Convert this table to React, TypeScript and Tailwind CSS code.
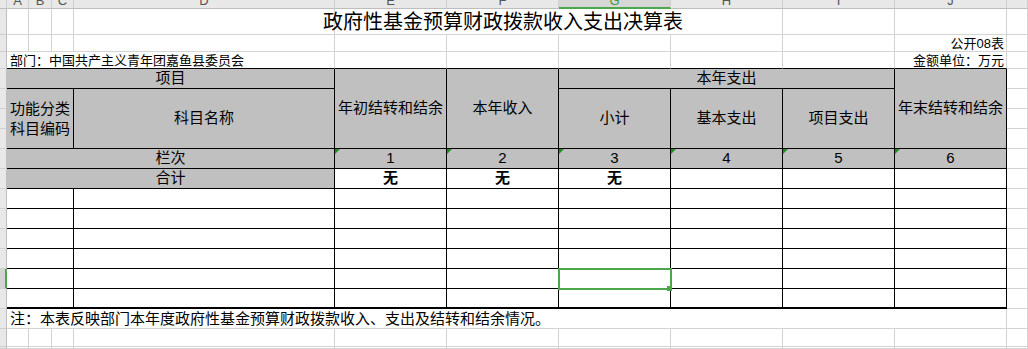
import type { ReactNode } from "react";

const COL: Record<number, string> = {
  1: "col-start-1",
  2: "col-start-2",
  3: "col-start-3",
  4: "col-start-4",
  5: "col-start-5",
  6: "col-start-6",
  7: "col-start-7",
  8: "col-start-8",
  9: "col-start-9",
  10: "col-start-10",
  11: "col-start-11",
  12: "col-start-12",
};

const ROW: Record<number, string> = {
  1: "row-start-1",
  2: "row-start-2",
  3: "row-start-3",
  4: "row-start-4",
  5: "row-start-5",
  6: "row-start-6",
  7: "row-start-7",
  8: "row-start-8",
  9: "row-start-9",
  10: "row-start-10",
  11: "row-start-11",
  12: "row-start-12",
  13: "row-start-13",
  14: "row-start-14",
  15: "row-start-15",
  16: "row-start-16",
  17: "row-start-17",
  18: "row-start-18",
  19: "row-start-19",
};

const CSPAN: Record<number, string> = { 1: "col-span-1", 3: "col-span-3", 4: "col-span-4", 10: "col-span-10" };
const RSPAN: Record<number, string> = { 1: "row-span-1", 3: "row-span-3", 4: "row-span-4" };

const GRID = "border-r border-b border-[#d4d4d4]";
const BLACK = "border-r border-b border-black";
const GRAY = "bg-[#c0c0c0]";
const TOPROW = "border-r border-b border-r-[#d4d4d4] border-b-black";

const letters = ["", "A", "B", "C", "D", "E", "F", "G", "H", "I", "J", ""];
const dataRows = [11, 12, 13, 14, 15, 16];

function Cell({
  c,
  r,
  cs = 1,
  rs = 1,
  className = "",
  children,
}: {
  c: number;
  r: number;
  cs?: number;
  rs?: number;
  className?: string;
  children?: ReactNode;
}) {
  return (
    <div className={`${COL[c]} ${ROW[r]} ${CSPAN[cs]} ${RSPAN[rs]} flex min-h-0 min-w-0 items-center ${className}`}>
      {children}
    </div>
  );
}

// green "number stored as text" marker
function Marker() {
  return (
    <svg className="absolute left-0 top-0" width="5" height="5" viewBox="0 0 5 5">
      <polygon points="0,0 5,0 0,5" fill="#1f8f1f" />
    </svg>
  );
}

export default function App() {
  return (
    <div className="h-[349px] w-full overflow-hidden bg-white font-['Liberation_Sans','Noto_Sans_CJK_SC',sans-serif] text-black">
      <div className="grid h-full grid-cols-[7px_22px_23px_22px_261px_repeat(6,112px)_1fr] grid-rows-[9px_26px_17px_17px_repeat(13,20px)_18px_1fr]">
        {/* ── column headers ── */}
        {letters.map((l, i) => (
          <Cell
            key={"h" + i}
            c={i + 1}
            r={1}
            className={
              i === 7
                ? "items-start justify-center overflow-hidden border-r border-b-2 border-r-[#cfcfcf] border-b-[#4ca64c] bg-[#d6d6d6] text-[#3f9a3f]"
                : "items-start justify-center overflow-hidden border-r border-b border-r-[#cfcfcf] border-b-[#bdbdbd] bg-[#e8e8e8] text-[#555]"
            }
          >
            <span className="-mt-[6px] text-[13px] leading-none">{l}</span>
          </Cell>
        ))}

        {/* ── row headers ── */}
        {Array.from({ length: 18 }, (_, k) => k + 2).map((r) => (
          <Cell
            key={"r" + r}
            c={1}
            r={r}
            className={
              r === 15
                ? "border-r-2 border-b border-r-[#4ca64c] border-b-[#cfcfcf] bg-[#d4d4d4]"
                : "border-r border-b border-r-[#bdbdbd] border-b-[#cfcfcf] bg-[#e8e8e8]"
            }
          />
        ))}

        {/* ── row 1: title ── */}
        {[2, 3, 4, 5].map((c) => (
          <Cell key={"t" + c} c={c} r={2} className={GRID} />
        ))}
        <Cell c={6} cs={4} r={2} className={GRID}>
          <span className="-ml-[12px] whitespace-nowrap text-[20px] leading-none">政府性基金预算财政拨款收入支出决算表</span>
        </Cell>
        {[10, 11, 12].map((c) => (
          <Cell key={"t" + c} c={c} r={2} className={GRID} />
        ))}

        {/* ── row 2 ── */}
        {[2, 3, 4, 5, 6, 7, 8, 9, 10].map((c) => (
          <Cell key={"a" + c} c={c} r={3} className={GRID} />
        ))}
        <Cell c={11} r={3} className={`${GRID} justify-end pr-[2px]`}>
          <span className="whitespace-nowrap text-[13px] leading-none">公开08表</span>
        </Cell>
        <Cell c={12} r={3} className={GRID} />

        {/* ── row 3 ── */}
        <Cell c={2} cs={4} r={4} className={`${TOPROW} pl-[3px]`}>
          <span className="whitespace-nowrap text-[13px] leading-none">部门：中国共产主义青年团嘉鱼县委员会</span>
        </Cell>
        {[6, 7, 8, 9, 10].map((c) => (
          <Cell key={"b" + c} c={c} r={4} className={TOPROW} />
        ))}
        <Cell c={11} r={4} className={`${TOPROW} justify-end pr-[2px]`}>
          <span className="whitespace-nowrap text-[13px] leading-none">金额单位：万元</span>
        </Cell>
        <Cell c={12} r={4} className={GRID} />

        {/* ── header block ── */}
        <Cell c={2} cs={4} r={5} className={`${GRAY} ${BLACK} justify-center text-[15px]`}>项目</Cell>
        <Cell c={2} cs={3} r={6} rs={3} className={`${GRAY} ${BLACK} justify-center text-center text-[15px] leading-[20px]`}>
          功能分类
          <br />
          科目编码
        </Cell>
        <Cell c={5} r={6} rs={3} className={`${GRAY} ${BLACK} justify-center text-[15px]`}>科目名称</Cell>
        <Cell c={6} r={5} rs={4} className={`${GRAY} ${BLACK} justify-center whitespace-nowrap text-[15px]`}>年初结转和结余</Cell>
        <Cell c={7} r={5} rs={4} className={`${GRAY} ${BLACK} justify-center text-[15px]`}>本年收入</Cell>
        <Cell c={8} cs={3} r={5} className={`${GRAY} ${BLACK} justify-center text-[15px]`}>本年支出</Cell>
        <Cell c={8} r={6} rs={3} className={`${GRAY} ${BLACK} justify-center text-[15px]`}>小计</Cell>
        <Cell c={9} r={6} rs={3} className={`${GRAY} ${BLACK} justify-center text-[15px]`}>基本支出</Cell>
        <Cell c={10} r={6} rs={3} className={`${GRAY} ${BLACK} justify-center text-[15px]`}>项目支出</Cell>
        <Cell c={11} r={5} rs={4} className={`${GRAY} ${BLACK} justify-center whitespace-nowrap text-[15px]`}>年末结转和结余</Cell>

        {/* ── 栏次 ── */}
        <Cell c={2} cs={4} r={9} className={`${GRAY} ${BLACK} justify-center text-[15px]`}>栏次</Cell>
        {[1, 2, 3, 4, 5, 6].map((n) => (
          <Cell key={"n" + n} c={n + 5} r={9} className={`${GRAY} ${BLACK} relative justify-center text-[15px]`}>
            <Marker />
            {n}
          </Cell>
        ))}

        {/* ── 合计 ── */}
        <Cell c={2} cs={4} r={10} className={`${GRAY} ${BLACK} justify-center text-[15px]`}>合计</Cell>
        {[6, 7, 8].map((c) => (
          <Cell key={"w" + c} c={c} r={10} className={`${BLACK} justify-center text-[15px] font-bold`}>无</Cell>
        ))}
        {[9, 10, 11].map((c) => (
          <Cell key={"w" + c} c={c} r={10} className={BLACK} />
        ))}

        {/* ── data rows ── */}
        {dataRows.map((r) => {
          const b = r === 16 ? "border-r border-b-2 border-black" : BLACK;
          return [
            <Cell key={"d2" + r} c={2} cs={3} r={r} className={b} />,
            <Cell key={"d5" + r} c={5} r={r} className={b} />,
            ...[6, 7, 8, 9, 10, 11].map((c) => (
              <Cell key={"d" + c + "-" + r} c={c} r={r} className={`${b} ${c === 8 && r === 15 ? "relative" : ""}`}>
                {c === 8 && r === 15 && (
                  <>
                    <div className="absolute -left-px -top-px z-10 h-[22px] w-[114px] border-2 border-[#4ca64c]" />
                    <div className="absolute left-[108px] top-[17px] z-10 h-[5px] w-[5px] bg-[#4ca64c]" />
                  </>
                )}
              </Cell>
            )),
          ];
        })}

        {/* ── K column beside table ── */}
        {[5, 6, 7, 8, 9, 10, 11, 12, 13, 14, 15, 16].map((r) => (
          <Cell key={"k" + r} c={12} r={r} className={GRID} />
        ))}

        {/* ── note ── */}
        <Cell c={2} cs={10} r={17} className={`${GRID} pl-[3px]`}>
          <span className="whitespace-nowrap text-[15px] leading-none">注：本表反映部门本年度政府性基金预算财政拨款收入、支出及结转和结余情况。</span>
        </Cell>
        <Cell c={12} r={17} className={GRID} />

        {[18, 19].map((r) =>
          [2, 3, 4, 5, 6, 7, 8, 9, 10, 11, 12].map((c) => <Cell key={"e" + r + "-" + c} c={c} r={r} className={GRID} />),
        )}
      </div>
    </div>
  );
}
